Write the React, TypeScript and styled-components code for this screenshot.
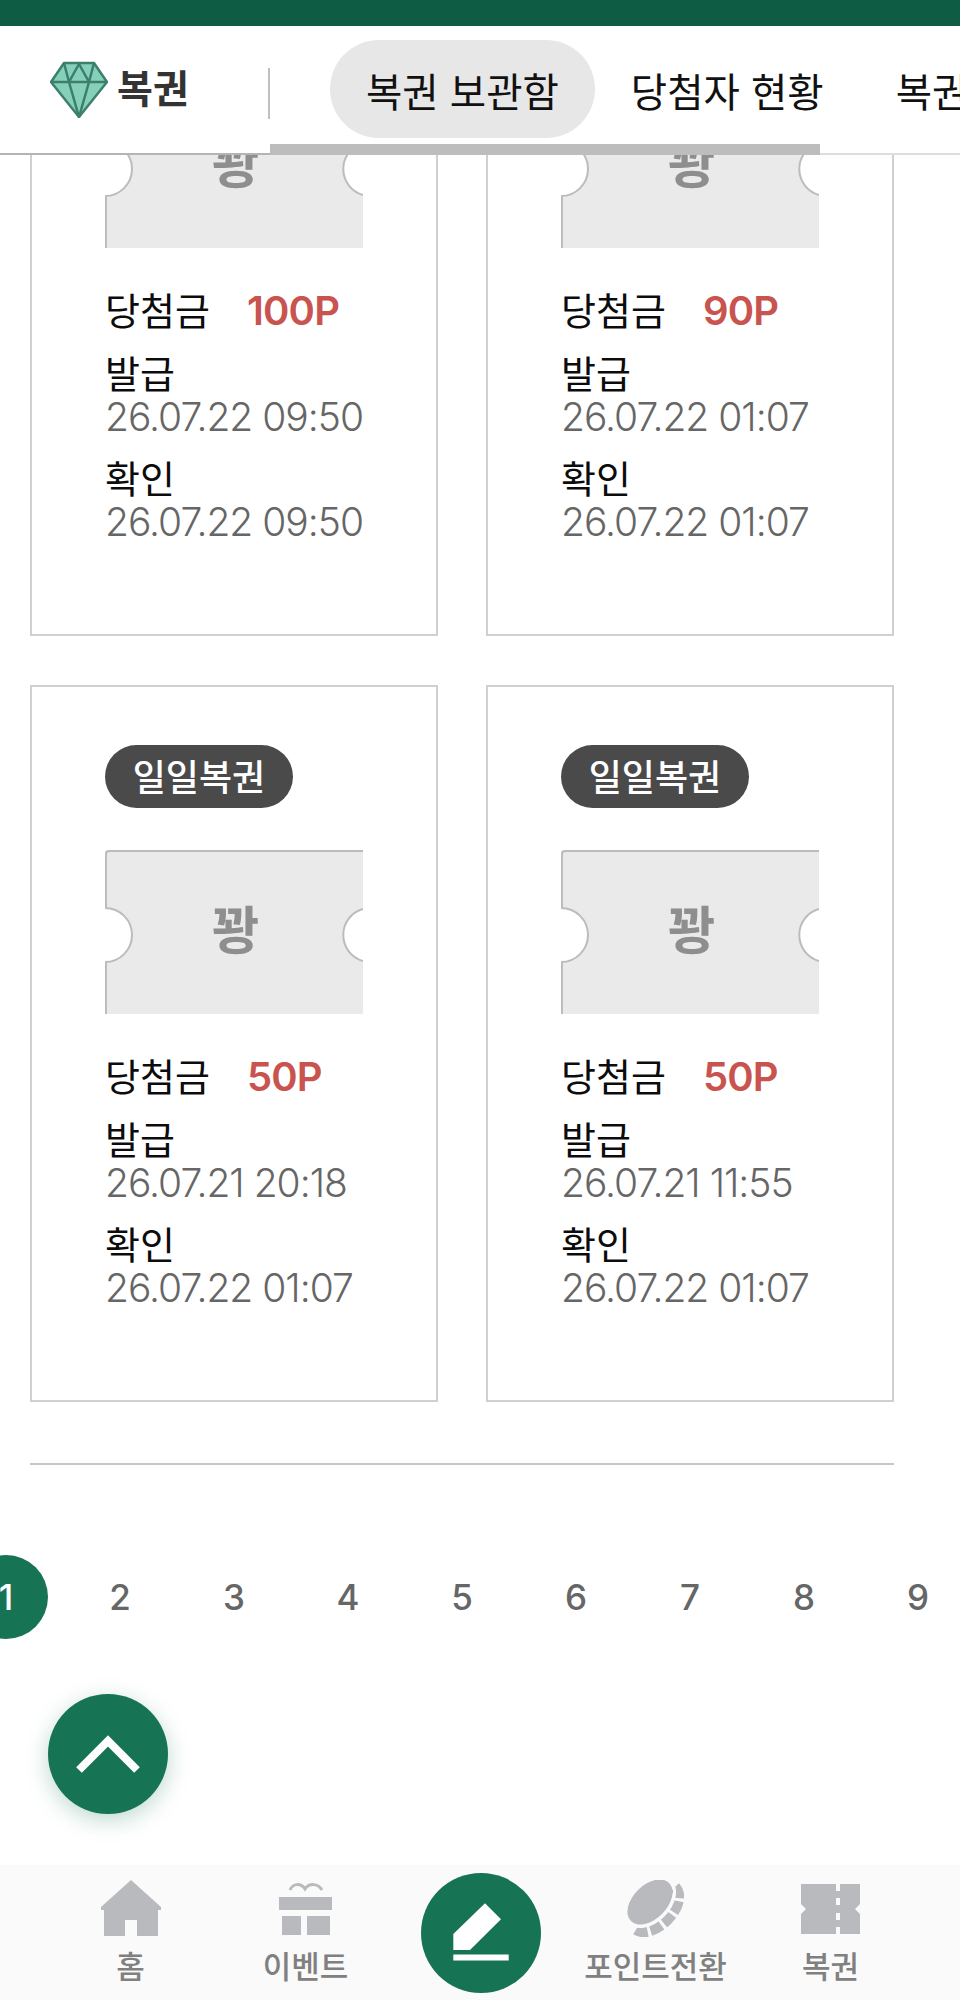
import * as React from 'react';
import styled, { createGlobalStyle } from 'styled-components';

const GREEN = '#167354';

const GlobalStyle = createGlobalStyle`
  html, body {
    margin: 0;
    padding: 0;
    background: #fff;
  }
  body {
    font-family: Inter, "Noto Sans CJK KR", sans-serif;
  }
`;

const Page = styled.div`
  position: relative;
  width: 960px;
  height: 2000px;
  overflow: hidden;
  display: flex;
  flex-direction: column;
  background: #fff;
`;

const TopBar = styled.div`
  flex: none;
  height: 26px;
  background: #0f5c45;
`;

const Header = styled.header`
  position: relative;
  z-index: 2;
  flex: none;
  height: 129px;
  box-sizing: border-box;
  display: flex;
  align-items: flex-start;
  background: #fff;
  border-bottom: 2px solid #dddddd;
  overflow: hidden;
`;

const Brand = styled.div`
  flex: none;
  width: 268px;
  height: 127px;
  box-sizing: border-box;
  padding-left: 50px;
  display: flex;
  align-items: center;
  gap: 9px;
  font-size: 39px;
  font-weight: 700;
  color: #333;
`;

const BrandLabel = styled.span`
  line-height: 42px;
  margin-top: -2px;
`;

const VRule = styled.div`
  flex: none;
  width: 2px;
  height: 51px;
  margin-top: 42px;
  background: #c0c0c0;
`;

const Tabs = styled.nav`
  flex: none;
  display: flex;
  margin-left: 60px;
  margin-top: 14px;
`;

const Tab = styled.div<{ $active?: boolean }>`
  flex: none;
  height: 98px;
  padding: 0 36px;
  display: flex;
  align-items: center;
  border-radius: 49px;
  font-size: 39.5px;
  color: #111;
  white-space: nowrap;
  background: ${p => (p.$active ? '#e7e7e7' : 'transparent')};
`;

const OverlayWrap = styled.div`
  position: absolute;
  z-index: 3;
  left: 0;
  top: 155px;
  width: 960px;
  height: 0;
`;

const HeaderRuleLeft = styled.div`
  position: absolute;
  left: 0;
  bottom: 0;
  width: 270px;
  height: 2px;
  background: #b4b4b4;
`;

const TabIndicator = styled.div`
  position: absolute;
  left: 270px;
  bottom: 0;
  width: 550px;
  height: 11px;
  background: #bdbdbd;
`;

const Viewport = styled.main`
  flex: 1;
  min-height: 0;
  overflow: hidden;
`;

const Scrolled = styled.div`
  margin-top: -236px;
  padding: 0 66px 0 30px;
`;

const CardGrid = styled.div`
  display: grid;
  grid-template-columns: 408px 408px;
  column-gap: 48px;
  row-gap: 49px;
`;

const Card = styled.article`
  height: 717px;
  box-sizing: border-box;
  padding: 58px 0 0 73px;
  border: 2px solid #d0d0d0;
`;

const Badge = styled.div`
  width: 188px;
  height: 63px;
  box-sizing: border-box;
  padding-bottom: 4px;
  display: flex;
  align-items: center;
  justify-content: center;
  border-radius: 32px;
  background: #4a4a4a;
  color: #fff;
  font-size: 36px;
  font-weight: 500;
`;

const Ticket = styled.div`
  position: relative;
  width: 258px;
  height: 164px;
  margin-top: 42px;
  padding-left: 3px;
  box-sizing: border-box;
  display: flex;
  align-items: center;
  justify-content: center;
`;

const TicketShape = styled.svg`
  position: absolute;
  inset: 0;
`;

const TicketLabel = styled.span`
  position: relative;
  font-size: 52px;
  font-weight: 700;
  line-height: 56px;
  color: #8e8e8e;
`;

const PrizeRow = styled.div`
  display: flex;
  align-items: center;
  margin-top: 42px;
  height: 42px;
`;

const Label = styled.div<{ $gap?: number }>`
  font-size: 38px;
  line-height: 42px;
  color: #0c0c0c;
  margin-top: ${p => p.$gap ?? 0}px;
`;

const Prize = styled.span`
  margin-left: 37px;
  font-size: 40px;
  font-weight: 600;
  letter-spacing: -0.8px;
  line-height: 42px;
  color: #c9544f;
`;

const DateText = styled.div`
  margin-top: 1px;
  font-size: 39px;
  font-weight: 300;
  letter-spacing: -1px;
  line-height: 42px;
  color: #666;
  white-space: nowrap;
`;

const Divider = styled.div`
  height: 2px;
  margin-top: 61px;
  background: #c6c6c6;
`;

const Pagination = styled.div`
  display: flex;
  margin: 90px 0 0 -81px;
`;

const PageNo = styled.div<{ $active?: boolean }>`
  flex: none;
  width: 114px;
  height: 84px;
  display: flex;
  align-items: center;
  justify-content: center;
  font-size: 35px;
  font-weight: 500;
  color: ${p => (p.$active ? '#fff' : '#666')};
  position: relative;
  &::before {
    content: '';
    display: ${p => (p.$active ? 'block' : 'none')};
    position: absolute;
    width: 84px;
    height: 84px;
    left: 15px;
    border-radius: 50%;
    background: ${GREEN};
  }
`;

const PageNoText = styled.span`
  position: relative;
`;

const ScrollTop = styled.button`
  position: absolute;
  left: 48px;
  top: 1694px;
  width: 120px;
  height: 120px;
  padding: 0;
  border: 0;
  border-radius: 50%;
  background: ${GREEN};
  box-shadow: 0 6px 22px rgba(22, 115, 84, 0.28);
  display: flex;
  align-items: center;
  justify-content: center;
`;

const BottomNav = styled.nav`
  flex: none;
  height: 135px;
  box-sizing: border-box;
  padding-left: 43px;
  display: grid;
  grid-template-columns: repeat(5, 175px);
  background: #fafafa;
`;

const NavItem = styled.div`
  display: flex;
  flex-direction: column;
  align-items: center;
  padding-top: 15px;
`;

const NavIconSlot = styled.div`
  height: 57px;
  display: flex;
  align-items: center;
  justify-content: center;
  filter: blur(0.5px);
`;

const NavLabel = styled.span`
  margin-top: 12px;
  font-size: 31px;
  font-weight: 500;
  line-height: 36px;
  color: #808080;
  white-space: nowrap;
`;

const WriteButton = styled.div`
  width: 120px;
  height: 120px;
  margin: 8px auto 0;
  border-radius: 50%;
  background: ${GREEN};
`;

const GemSvg = styled.svg`
  filter: blur(0.5px);
`;

const GemIcon = () => (
  <GemSvg width="58" height="57" viewBox="0 0 58 57">
    <path d="M14 2 H44 L57 21 L29 56 L1 21 Z" fill="#86cfb9" stroke="#3c7f6c" strokeWidth="2.5" strokeLinejoin="round" />
    <path d="M1 21 H57 M14 2 L19 21 L29 56 L39 21 L44 2 M19 21 L29 3 L39 21" fill="none" stroke="#3c7f6c" strokeWidth="2.5" />
  </GemSvg>
);

const TicketArt = () => (
  <TicketShape width="258" height="164" viewBox="0 0 258 164">
    <path d="M0 3 Q0 0 3 0 H258 V59 A27 27 0 0 0 258 111 V164 H0 V112 A27 27 0 0 0 0 58 Z" fill="#eaeaea" />
    <path d="M258 1 H4 Q1 1 1 4 V58 H0 A27 27 0 0 1 0 112 H1 V164" fill="none" stroke="#bcbcbc" strokeWidth="2" />
    <path d="M258 59 A27 27 0 0 0 258 111" fill="none" stroke="#bcbcbc" strokeWidth="2" />
  </TicketShape>
);

const HomeIcon = () => (
  <svg width="60" height="57" viewBox="0 0 60 57">
    <path d="M30 0 L60 27 V30 H57 V56 H36 V40 H24 V56 H3 V30 H0 V27 Z" fill="#b8babd" />
  </svg>
);

const GiftIcon = () => (
  <svg width="53" height="55" viewBox="0 0 53 55">
    <path d="M11 9 C14 2 22 2 26 8 C30 2 39 2 43 9" fill="none" stroke="#b8babd" strokeWidth="3" />
    <rect x="0" y="16" width="53" height="13" fill="#b8babd" />
    <rect x="3" y="35" width="19" height="19" fill="#b8babd" />
    <rect x="28" y="35" width="23" height="19" fill="#b8babd" />
  </svg>
);

const CoinIcon = () => (
  <svg width="57" height="57" viewBox="0 0 57 57">
    <ellipse cx="23" cy="22" rx="27" ry="17" transform="rotate(-45 23 22)" fill="#b8babd" />
    <path d="M48 7 C57 17 48 32 40 40 C32 48 18 56 8 49" fill="none" stroke="#b8babd" strokeWidth="11" strokeDasharray="12 3" />
    <ellipse cx="23" cy="22" rx="29" ry="19" transform="rotate(-45 23 22)" fill="none" stroke="#fafafa" strokeWidth="3" />
  </svg>
);

const TicketNavIcon = () => (
  <svg width="59" height="50" viewBox="0 0 59 50">
    <path d="M0 0 H59 V20 L54 25 L59 30 V50 H0 V30 L5 25 L0 20 Z" fill="#b8babd" />
    <rect x="35" y="0" width="4" height="7" fill="#fafafa" />
    <rect x="35" y="14" width="4" height="7" fill="#fafafa" />
    <rect x="35" y="29" width="4" height="7" fill="#fafafa" />
    <rect x="35" y="43" width="4" height="7" fill="#fafafa" />
  </svg>
);

const ChevronUp = () => (
  <svg width="64" height="40" viewBox="0 0 64 40">
    <path d="M3 36 L32 7 L61 36" fill="none" stroke="#fff" strokeWidth="8" />
  </svg>
);

const PencilIcon = () => (
  <svg width="120" height="120" viewBox="0 0 120 120">
    <path d="M32.3 61 L64 30.3 L80 46.3 L49 77 H32.3 Z" fill="#fff" />
    <rect x="32.3" y="81.5" width="55.4" height="6" fill="#fff" />
  </svg>
);

const tickets = [
  { prize: '100P', issued: '26.07.22 09:50', checked: '26.07.22 09:50' },
  { prize: '90P', issued: '26.07.22 01:07', checked: '26.07.22 01:07' },
  { prize: '50P', issued: '26.07.21 20:18', checked: '26.07.22 01:07' },
  { prize: '50P', issued: '26.07.21 11:55', checked: '26.07.22 01:07' },
];

const pages = [1, 2, 3, 4, 5, 6, 7, 8, 9];

export default function App() {
  return (
    <Page>
      <GlobalStyle />
      <TopBar />
      <Header>
        <Brand>
          <GemIcon />
          <BrandLabel>복권</BrandLabel>
        </Brand>
        <VRule />
        <Tabs>
          <Tab $active>복권 보관함</Tab>
          <Tab>당첨자 현황</Tab>
          <Tab>복권</Tab>
        </Tabs>
      </Header>
      {/* the rail under the header sits over the scrolled list */}
      <OverlayWrap>
        <HeaderRuleLeft />
        <TabIndicator />
      </OverlayWrap>
      <Viewport>
        <Scrolled>
          <CardGrid>
            {tickets.map((t, i) => (
              <Card key={i}>
                <Badge>일일복권</Badge>
                <Ticket>
                  <TicketArt />
                  <TicketLabel>꽝</TicketLabel>
                </Ticket>
                <PrizeRow>
                  <Label>당첨금</Label>
                  <Prize>{t.prize}</Prize>
                </PrizeRow>
                <Label $gap={21}>발급</Label>
                <DateText>{t.issued}</DateText>
                <Label $gap={20}>확인</Label>
                <DateText>{t.checked}</DateText>
              </Card>
            ))}
          </CardGrid>
          <Divider />
          <Pagination>
            {pages.map(n => (
              <PageNo key={n} $active={n === 1}>
                <PageNoText>{n}</PageNoText>
              </PageNo>
            ))}
          </Pagination>
        </Scrolled>
      </Viewport>
      <ScrollTop aria-label="맨 위로">
        <ChevronUp />
      </ScrollTop>
      <BottomNav>
        <NavItem>
          <NavIconSlot><HomeIcon /></NavIconSlot>
          <NavLabel>홈</NavLabel>
        </NavItem>
        <NavItem>
          <NavIconSlot><GiftIcon /></NavIconSlot>
          <NavLabel>이벤트</NavLabel>
        </NavItem>
        <div>
          <WriteButton><PencilIcon /></WriteButton>
        </div>
        <NavItem>
          <NavIconSlot><CoinIcon /></NavIconSlot>
          <NavLabel>포인트전환</NavLabel>
        </NavItem>
        <NavItem>
          <NavIconSlot><TicketNavIcon /></NavIconSlot>
          <NavLabel>복권</NavLabel>
        </NavItem>
      </BottomNav>
    </Page>
  );
}
